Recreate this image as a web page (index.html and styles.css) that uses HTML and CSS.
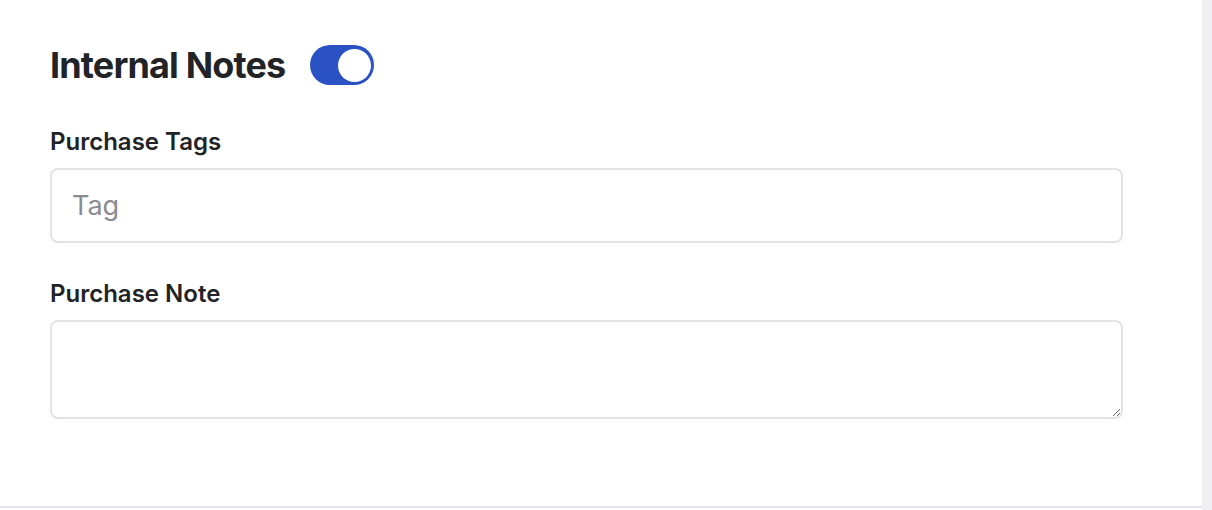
FILE: index.html
```html
<!DOCTYPE html>
<html lang="en">
<head>
  <meta charset="UTF-8">
  <title>Internal Notes</title>
  <link rel="stylesheet" href="styles.css">
</head>
<body>
  <div class="page">
    <div class="panel">
      <div class="section-head">
        <h2>Internal Notes</h2>
        <label class="switch">
          <input type="checkbox" checked>
          <span class="track"><span class="knob"></span></span>
        </label>
      </div>

      <div class="field">
        <label for="tags">Purchase Tags</label>
        <input type="text" id="tags" placeholder="Tag">
      </div>

      <div class="field">
        <label for="note">Purchase Note</label>
        <textarea id="note"></textarea>
      </div>
    </div>
    <div class="rail"></div>
  </div>
</body>
</html>
```

FILE: styles.css
```css
body { margin: 0; font-family: Inter, 'Noto Sans', sans-serif; color: #222326; background: #fff; }
.page { display: flex; height: 510px; }
.panel { flex: 1; padding: 42px 79px 0 50px; border-bottom: 2px solid #e3e2ea; height: 508px; box-sizing: border-box; }
.rail { width: 10px; background: #f0f0f3; }

.section-head { display: flex; align-items: center; gap: 25px; height: 46px; }
.section-head h2 { margin: 0; font-size: 36px; line-height: 46px; font-weight: 700; letter-spacing: -0.85px; }

.switch { display: inline-block; cursor: pointer; }
.switch input { display: none; }
.track { display: flex; align-items: center; justify-content: flex-end; width: 64px; height: 40px; padding: 0 3px; box-sizing: border-box; border-radius: 20px; background: #2a52c4; }
.knob { width: 33px; height: 33px; border-radius: 50%; background: #fff; }

.field { margin-top: 42px; }
.field + .field { margin-top: 39px; }
.field label { display: block; font-size: 24px; line-height: 24px; font-weight: 600; margin-bottom: 14px; }
.field input, .field textarea {
  display: block; width: 100%; box-sizing: border-box; border: 2px solid #e3e3e7; border-radius: 8px;
  font-family: inherit; font-size: 27px; color: #222326; background: #fff; outline: none;
}
.field input { height: 75px; padding: 0 20px; }
.field input::placeholder { color: #8b8b92; }
.field textarea { height: 99px; padding: 12px 20px; resize: vertical; }
```
